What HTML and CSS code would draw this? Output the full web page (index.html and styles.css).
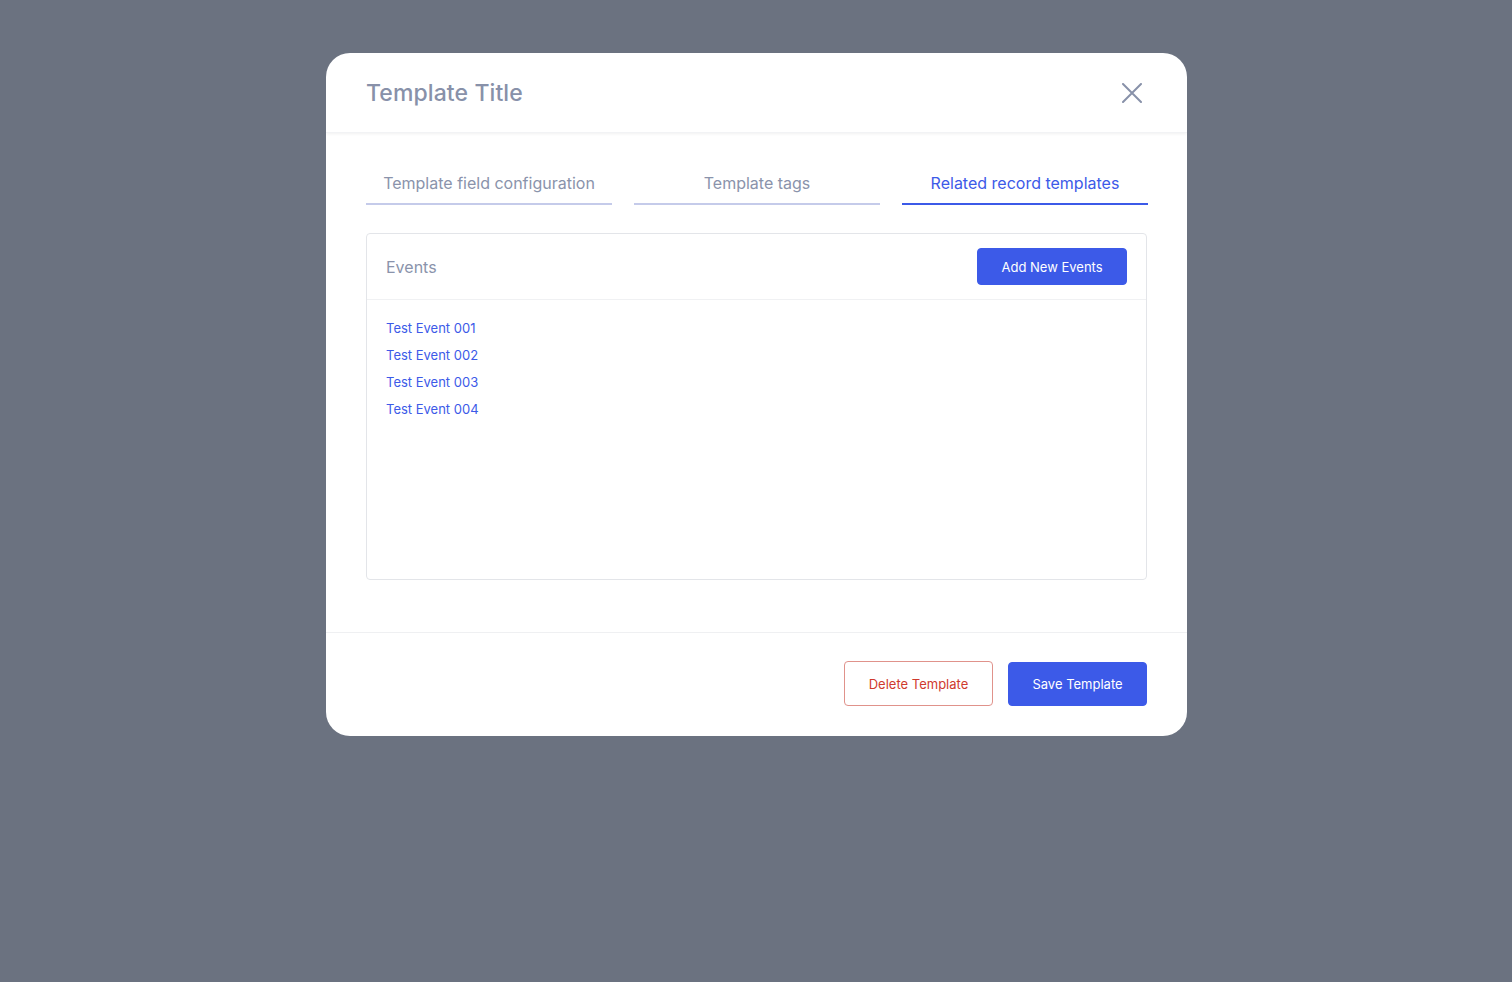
FILE: index.html
```html
<!DOCTYPE html>
<html lang="en">
<head>
<meta charset="utf-8">
<title>Template Title</title>
<link rel="stylesheet" href="styles.css">
</head>
<body>
<div class="overlay">
  <div class="modal">
    <header class="modal-header">
      <h1 class="modal-title">Template Title</h1>
      <button class="close-btn" aria-label="Close">
        <svg width="20" height="20" viewBox="0 0 20 20"><path d="M1 1L19 19M19 1L1 19" stroke="#8891a9" stroke-width="2" stroke-linecap="round" fill="none"/></svg>
      </button>
    </header>
    <div class="modal-body">
      <nav class="tabs">
        <div class="tab">Template field configuration</div>
        <div class="tab">Template tags</div>
        <div class="tab active">Related record templates</div>
      </nav>
      <section class="panel">
        <div class="panel-head">
          <span class="panel-title">Events</span>
          <button class="btn btn-primary btn-sm">Add New Events</button>
        </div>
        <ul class="event-list">
          <li><a href="#">Test Event 001</a></li>
          <li><a href="#">Test Event 002</a></li>
          <li><a href="#">Test Event 003</a></li>
          <li><a href="#">Test Event 004</a></li>
        </ul>
      </section>
    </div>
    <footer class="modal-footer">
      <button class="btn btn-danger">Delete Template</button>
      <button class="btn btn-primary btn-lg">Save Template</button>
    </footer>
  </div>
</div>
</body>
</html>
```

FILE: styles.css
```css
* { box-sizing: border-box; }
html, body { margin: 0; padding: 0; }
body {
  background: #6b7280;
  font-family: Inter, "Noto Sans", sans-serif;
  min-height: 982px;
}
.overlay {
  display: flex;
  justify-content: center;
  padding-top: 53px;
  padding-left: 1px;
}
.modal {
  width: 861px;
  height: 683px;
  background: #fff;
  border-radius: 24px;
  display: flex;
  flex-direction: column;
  overflow: hidden;
}
.modal-header {
  height: 80px;
  flex-shrink: 0;
  display: flex;
  align-items: center;
  justify-content: space-between;
  padding: 0 45px 0 40px;
  box-shadow: 0 1px 3px rgba(0,0,0,0.06);
  border-bottom: 1px solid #f2f3f5;
  position: relative;
}
.modal-title {
  margin: 0;
  font-size: 23px;
  font-weight: 500;
  color: #8891a9;
  letter-spacing: 0.1px;
}
.close-btn {
  border: 0;
  background: none;
  padding: 0;
  width: 20px;
  height: 20px;
  display: flex;
  cursor: pointer;
}
.modal-body {
  flex: 1;
  padding: 32px 40px 0 40px;
}
.tabs {
  display: flex;
  gap: 22px;
  width: 782px;
}
.tab {
  flex: 1;
  text-align: center;
  font-size: 16px;
  color: #8a93ab;
  height: 40px;
  line-height: 36px;
  border-bottom: 2px solid #c5cbea;
}
.tab.active {
  color: #3c5ae8;
  border-bottom-color: #3c5ae8;
}
.panel {
  margin-top: 28px;
  width: 781px;
  height: 347px;
  border: 1px solid #e3e5e9;
  border-radius: 4px;
}
.panel-head {
  height: 66px;
  display: flex;
  align-items: center;
  justify-content: space-between;
  padding: 0 19px;
  border-bottom: 1px solid #f0f1f3;
}
.panel-title {
  font-size: 16px;
  color: #8a93ab;
}
.btn {
  font-family: Inter, "Noto Sans", sans-serif;
  border-radius: 4px;
  cursor: pointer;
  font-size: 13px;
  padding: 0;
}
.btn-primary {
  background: #3c5ae8;
  border: 1px solid #3c5ae8;
  color: #fff;
}
.btn-sm {
  width: 150px;
  height: 37px;
}
.btn-lg {
  width: 139px;
  height: 44px;
}
.btn-danger {
  background: #fff;
  border: 1px solid #e0928b;
  color: #cf3a2e;
  width: 149px;
  height: 45px;
  margin-top: -1px;
}
.event-list {
  list-style: none;
  margin: 0;
  padding: 19px 19px 0;
}
.event-list li {
  height: 27px;
  line-height: 18px;
  font-size: 13px;
}
.event-list a {
  color: #3c5ae8;
  text-decoration: none;
}
.modal-footer {
  flex-shrink: 0;
  height: 104px;
  border-top: 1px solid #eff0f2;
  display: flex;
  justify-content: flex-end;
  align-items: flex-start;
  gap: 15px;
  padding: 29px 40px 0 0;
}
```
